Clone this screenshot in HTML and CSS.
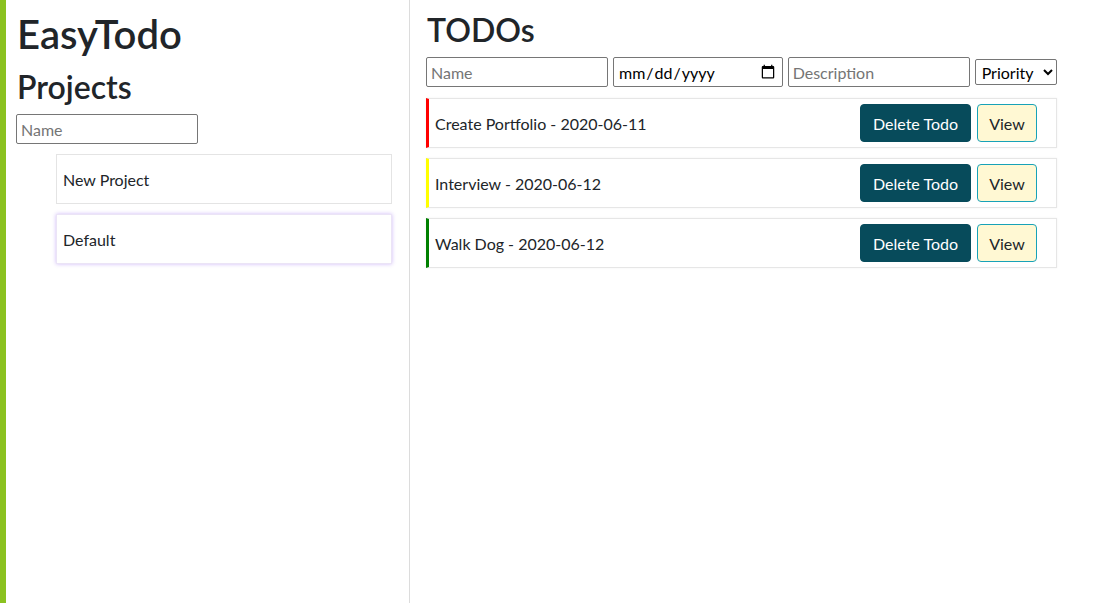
FILE: index.html
```html
<!DOCTYPE html>
<html>
<head>
<meta charset="utf-8">
<link rel="stylesheet" href="styles.css">
</head>
<body>
<div class="app">
  <aside class="sidebar">
    <h1 class="title">EasyTodo</h1>
    <h2 class="subtitle projects-title">Projects</h2>
    <input class="field field-name" type="text" placeholder="Name">
    <ul class="projects">
      <li class="project">New Project</li>
      <li class="project project-active">Default</li>
    </ul>
  </aside>
  <main class="main">
    <h2 class="subtitle todos-title">TODOs</h2>
    <form class="todo-form">
      <input class="field field-name" type="text" placeholder="Name">
      <input class="field field-date" type="date">
      <input class="field field-desc" type="text" placeholder="Description">
      <select class="field field-select">
        <option>Priority</option>
        <option>High</option>
        <option>Medium</option>
        <option>Low</option>
      </select>
    </form>
    <ul class="todos">
      <li class="todo prio-high">
        <span class="todo-text">Create Portfolio - 2020-06-11</span>
        <div class="todo-actions">
          <button class="btn btn-delete" type="button">Delete Todo</button>
          <button class="btn btn-view" type="button">View</button>
        </div>
      </li>
      <li class="todo prio-medium">
        <span class="todo-text">Interview - 2020-06-12</span>
        <div class="todo-actions">
          <button class="btn btn-delete" type="button">Delete Todo</button>
          <button class="btn btn-view" type="button">View</button>
        </div>
      </li>
      <li class="todo prio-low">
        <span class="todo-text">Walk Dog - 2020-06-12</span>
        <div class="todo-actions">
          <button class="btn btn-delete" type="button">Delete Todo</button>
          <button class="btn btn-view" type="button">View</button>
        </div>
      </li>
    </ul>
  </main>
</div>
</body>
</html>
```

FILE: styles.css
```css
* { box-sizing: border-box; }

html, body {
  margin: 0;
  padding: 0;
  height: 100%;
}

body {
  font-family: "Lato", "Noto Sans", sans-serif;
  font-size: 16px;
  color: #212529;
  background: #fff;
}

.app {
  display: flex;
  min-height: 100vh;
  border-left: 6px solid #8bc220;
}

.sidebar {
  width: 404px;
  flex: none;
  border-right: 1px solid #dcdcdc;
  padding: 10px 17px 0 10px;
}

.title {
  font-size: 40px;
  font-weight: 600;
  line-height: 1.2;
  margin: 0 0 10px 1px;
}

.subtitle {
  font-size: 32px;
  font-weight: 600;
  line-height: 1.2;
  margin: 0 0 8px 1px;
}

.field {
  font-family: inherit;
  font-size: 16px;
  height: 30px;
  border: 1px solid #767676;
  border-radius: 2px;
  padding: 1px 4px;
  color: #000;
  background: #fff;
}

.field::placeholder { color: #757575; }

.field-name { width: 182px; }
.field-date { width: 171px; }
.field-desc { width: 182px; }
.field-select {
  width: 83px;
  height: 26px;
  padding: 0 0 0 2px;
}

.projects {
  list-style: none;
  margin: 10px 0 0;
  padding: 0 0 0 40px;
  display: flex;
  flex-direction: column;
  gap: 10px;
}

.project {
  height: 50px;
  display: flex;
  align-items: center;
  padding-left: 6px;
  border: 1px solid #e4e4e4;
  background: #fff;
}

.project-active {
  border-color: #ebe4f6;
  box-shadow: 0 0 4px rgba(150, 100, 240, 0.45);
}

.main {
  flex: 1;
  padding: 11px 0 0 16px;
}

.todos-title {
  margin-bottom: 8px;
}

.todo-form {
  display: flex;
  align-items: center;
  gap: 5px;
  width: 631px;
}

.todos {
  list-style: none;
  margin: 11px 0 0;
  padding: 0;
  width: 631px;
  display: flex;
  flex-direction: column;
  gap: 10px;
}

.todo {
  height: 50px;
  display: flex;
  align-items: center;
  justify-content: space-between;
  border: 1px solid #e6e6e6;
  border-left-width: 3px;
  box-shadow: 0 0 2px rgba(0, 0, 0, 0.06);
  padding: 0 19px 0 6px;
}

.prio-high { border-left-color: #ff0000; }
.prio-medium { border-left-color: #ffff00; }
.prio-low { border-left-color: #008000; }

.todo-actions {
  display: flex;
  gap: 6px;
}

.btn {
  font-family: inherit;
  font-size: 16px;
  height: 38px;
  padding: 0;
  white-space: nowrap;
  border-radius: 4px;
  border: 1px solid transparent;
  cursor: pointer;
}

.btn-delete {
  width: 111px;
  background: #074b5b;
  border-color: #074b5b;
  color: #fff;
}

.btn-view {
  width: 60px;
  background: #fff8d3;
  border-color: #17a2b8;
  color: #212529;
}
```
